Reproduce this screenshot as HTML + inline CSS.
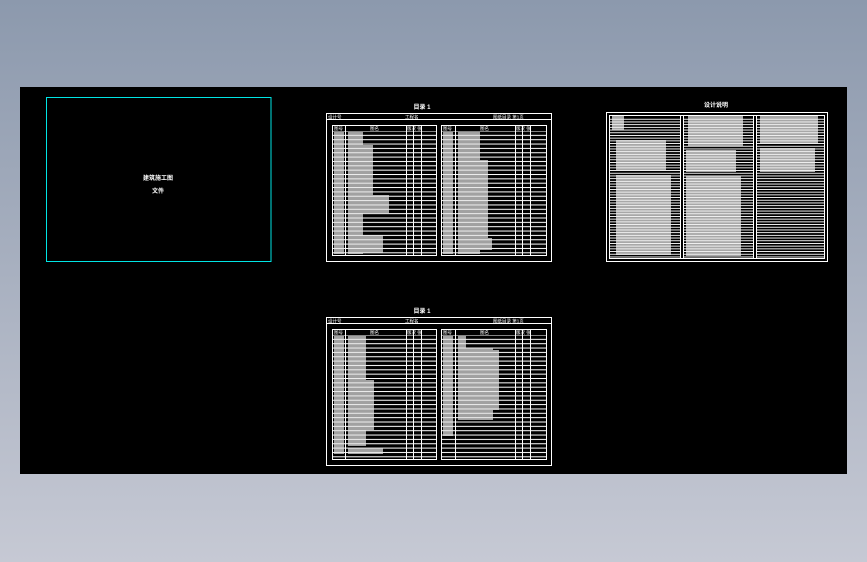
<!DOCTYPE html>
<html><head><meta charset="utf-8"><style>
html,body{margin:0;padding:0;width:867px;height:562px;overflow:hidden;background:linear-gradient(#8c99ad,#c6c9d4);font-family:"Liberation Sans","Noto Sans CJK SC",sans-serif}
svg{position:absolute;left:0;top:0}
</style></head><body>
<svg width="867" height="562" viewBox="0 0 867 562" xmlns="http://www.w3.org/2000/svg" font-family="Liberation Sans, Noto Sans CJK SC, sans-serif">
<defs>
<pattern id="rows" x="0" y="0" width="10" height="4.35" patternUnits="userSpaceOnUse"><rect x="0" y="0" width="10" height="1" fill="#fff"/></pattern>
<pattern id="rows3" x="0" y="0" width="10" height="2.7" patternUnits="userSpaceOnUse"><rect x="0" y="0" width="10" height="0.9" fill="#fff"/></pattern>
<g id="tbl">
<text x="422" y="109" font-size="6" font-weight="bold" fill="#fff" text-anchor="middle">目录 1</text>
<rect x="326.5" y="113.5" width="225" height="148" fill="none" stroke="#fff"/>
<line x1="326" y1="119.5" x2="552" y2="119.5" stroke="#fff"/>
<text x="328" y="118.5" font-size="4.5" fill="#fff">设计号</text>
<text x="405" y="118.5" font-size="4.5" fill="#fff">工程名</text>
<text x="493" y="118.5" font-size="4.5" fill="#fff">图纸目录 第1页</text>
<g fill="none" stroke="#fff">
<rect x="332.5" y="125.5" width="104" height="130"/>
<rect x="441.5" y="125.5" width="105" height="130"/>
<line x1="345.5" y1="125" x2="345.5" y2="255"/><line x1="406.5" y1="125" x2="406.5" y2="255"/><line x1="413.5" y1="125" x2="413.5" y2="255"/><line x1="421.5" y1="125" x2="421.5" y2="255"/>
<line x1="455.5" y1="125" x2="455.5" y2="255"/><line x1="515.5" y1="125" x2="515.5" y2="255"/><line x1="522.5" y1="125" x2="522.5" y2="255"/><line x1="530.5" y1="125" x2="530.5" y2="255"/>
</g>
<rect x="333" y="131" width="103" height="124" fill="url(#rows)"/>
<rect x="442" y="131" width="104" height="124" fill="url(#rows)"/>
<g font-size="4.5" fill="#fff"><text x="334" y="130">图号</text><text x="370" y="130">图名</text><text x="407" y="130">版次 张</text><text x="443" y="130">图号</text><text x="480" y="130">图名</text><text x="516" y="130">版次 张</text></g>
</g>
</defs>
<rect x="20" y="87" width="827" height="387" fill="#000"/>
<rect x="46.5" y="97.5" width="224.5" height="164" fill="none" stroke="#00e5e5"/>
<text x="158" y="180" font-size="6" font-weight="bold" fill="#fff" text-anchor="middle">建筑施工图</text>
<text x="158" y="193" font-size="6" font-weight="bold" fill="#fff" text-anchor="middle">文件</text>
<use href="#tbl"/>
<use href="#tbl" y="204"/>
<g fill="#e6e6e6" opacity="0.7">
<rect x="334" y="132" width="10" height="122"/><rect x="348" y="132" width="15" height="122"/><rect x="363" y="145" width="10" height="60"/><rect x="363" y="195" width="26" height="18"/><rect x="363" y="235" width="20" height="18"/>
<rect x="443" y="132" width="10" height="122"/><rect x="458" y="132" width="22" height="122"/><rect x="480" y="160" width="8" height="80"/><rect x="480" y="238" width="12" height="12"/>
<rect x="334" y="336" width="10" height="118"/><rect x="348" y="336" width="18" height="110"/><rect x="366" y="380" width="8" height="50"/><rect x="348" y="448" width="35" height="6"/>
<rect x="443" y="336" width="10" height="100"/><rect x="458" y="336" width="8" height="12"/><rect x="458" y="348" width="35" height="72"/><rect x="493" y="350" width="6" height="60"/>
</g>
<text x="716" y="107" font-size="6" font-weight="bold" fill="#fff" text-anchor="middle">设计说明</text>
<g fill="none" stroke="#fff">
<rect x="606.5" y="112.5" width="221" height="149"/>
<rect x="609.5" y="115.5" width="215" height="143"/>
<line x1="680.5" y1="115" x2="680.5" y2="259"/><line x1="683.5" y1="115" x2="683.5" y2="259"/>
<line x1="753.5" y1="115" x2="753.5" y2="259"/><line x1="756.5" y1="115" x2="756.5" y2="259"/>
</g>
<rect x="610" y="117" width="70" height="141" fill="url(#rows3)"/>
<rect x="684" y="117" width="69" height="141" fill="url(#rows3)"/>
<rect x="757" y="117" width="67" height="141" fill="url(#rows3)"/>
<g fill="#f0f0f0" opacity="0.7">
<rect x="612" y="116" width="12" height="14"/><rect x="616" y="140" width="50" height="30"/><rect x="616" y="175" width="55" height="80"/>
<rect x="688" y="116" width="55" height="30"/><rect x="686" y="150" width="50" height="22"/><rect x="686" y="176" width="55" height="80"/>
<rect x="760" y="116" width="58" height="28"/><rect x="760" y="148" width="55" height="24"/>
</g>
</svg>
</body></html>
